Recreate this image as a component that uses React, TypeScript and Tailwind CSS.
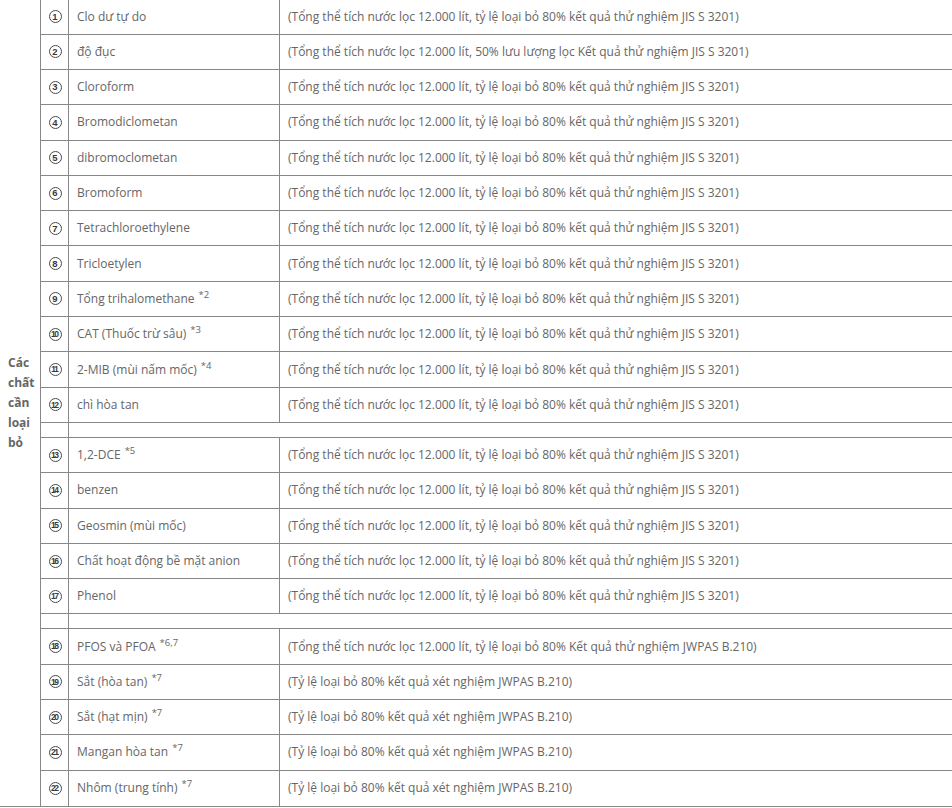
type Row = { no: number; name: string; sup?: string; desc: string } | "sep";

const JIS = "(Tổng thể tích nước lọc 12.000 lít, tỷ lệ loại bỏ 80% kết quả thử nghiệm JIS S 3201)";
const JW = "(Tỷ lệ loại bỏ 80% kết quả xét nghiệm JWPAS B.210)";

const rows: Row[] = [
  { no: 1, name: "Clo dư tự do", desc: JIS },
  { no: 2, name: "độ đục", desc: "(Tổng thể tích nước lọc 12.000 lít, 50% lưu lượng lọc Kết quả thử nghiệm JIS S 3201)" },
  { no: 3, name: "Cloroform", desc: JIS },
  { no: 4, name: "Bromodiclometan", desc: JIS },
  { no: 5, name: "dibromoclometan", desc: JIS },
  { no: 6, name: "Bromoform", desc: JIS },
  { no: 7, name: "Tetrachloroethylene", desc: JIS },
  { no: 8, name: "Tricloetylen", desc: JIS },
  { no: 9, name: "Tổng trihalomethane", sup: "*2", desc: JIS },
  { no: 10, name: "CAT (Thuốc trừ sâu)", sup: "*3", desc: JIS },
  { no: 11, name: "2-MIB (mùi nấm mốc)", sup: "*4", desc: JIS },
  { no: 12, name: "chì hòa tan", desc: JIS },
  "sep",
  { no: 13, name: "1,2-DCE", sup: "*5", desc: JIS },
  { no: 14, name: "benzen", desc: JIS },
  { no: 15, name: "Geosmin (mùi mốc)", desc: JIS },
  { no: 16, name: "Chất hoạt động bề mặt anion", desc: JIS },
  { no: 17, name: "Phenol", desc: JIS },
  "sep",
  { no: 18, name: "PFOS và PFOA", sup: "*6,7", desc: "(Tổng thể tích nước lọc 12.000 lít, tỷ lệ loại bỏ 80% Kết quả thử nghiệm JWPAS B.210)" },
  { no: 19, name: "Sắt (hòa tan)", sup: "*7", desc: JW },
  { no: 20, name: "Sắt (hạt mịn)", sup: "*7", desc: JW },
  { no: 21, name: "Mangan hòa tan", sup: "*7", desc: JW },
  { no: 22, name: "Nhôm (trung tính)", sup: "*7", desc: JW },
];

// circled number, drawn as a ring with the digits inside
function Num({ n }: { n: number }) {
  return (
    <span className="inline-flex w-[13px] h-[13px] rounded-full border-[1.6px] border-[#4a4a4a] items-center justify-center font-['Liberation_Sans',sans-serif] font-bold text-[#3a3a3a] leading-none">
      {n < 10 ? (
        <span className="text-[9.5px]">{n}</span>
      ) : (
        <span className="text-[8.5px] tracking-[-1.6px] -ml-[1.5px]">{n}</span>
      )}
    </span>
  );
}

export default function App() {
  return (
    <div className="bg-white w-[952px] h-[808px] overflow-hidden font-['Open_Sans',sans-serif] text-[12px] text-[#666]">
      <div className="flex -mt-[0.6px] border-b border-[#888]">
        {/* rowspan label */}
        <div className="w-[41px] shrink-0 border-r border-[#888] flex items-center pl-2 font-bold leading-[20px]">
          Các chất cần loại bỏ
        </div>

        <div className="flex-1 flex flex-col">
          {rows.map((r, i) => {
            const last = i === rows.length - 1;
            if (r === "sep") {
              return (
                <div key={i} className="flex h-[15px] border-b border-[#888]">
                  <div className="w-[28px] border-r border-[#888]" />
                  <div className="flex-1" />
                </div>
              );
            }
            return (
              <div
                key={i}
                className={`flex h-[35.3px] ${last ? "" : "border-b border-[#888]"}`}
              >
                <div className="w-[28px] shrink-0 border-r border-[#888] flex items-center justify-center pl-px">
                  <Num n={r.no} />
                </div>
                <div className="w-[211px] shrink-0 border-r border-[#888] flex items-center px-2 whitespace-nowrap">
                  <span>
                    {r.name}
                    {r.sup && <sup className="ml-1 text-[9.5px] -top-[5px]">{r.sup}</sup>}
                  </span>
                </div>
                <div className="flex-1 flex items-center px-2 whitespace-nowrap">{r.desc}</div>
              </div>
            );
          })}
        </div>
      </div>
    </div>
  );
}
